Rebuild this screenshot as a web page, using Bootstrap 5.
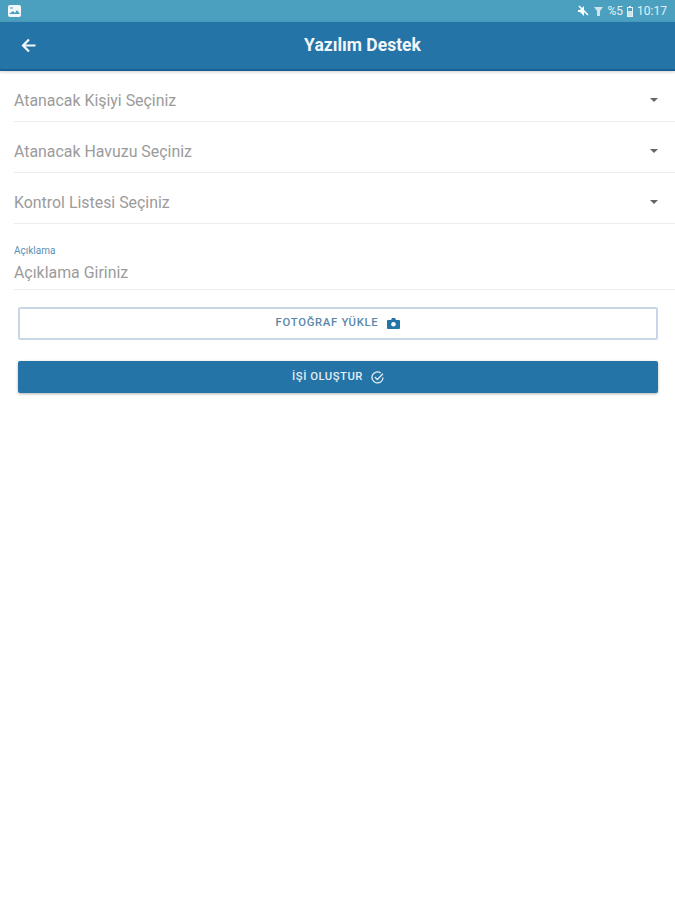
<!DOCTYPE html>
<html lang="tr">
<head>
  <meta charset="UTF-8" />
  <meta name="viewport" content="width=device-width, initial-scale=1.0"/>
  <title>Yazılım Destek</title>
  <link href="https://cdn.jsdelivr.net/npm/bootstrap@5.3.3/dist/css/bootstrap.min.css" rel="stylesheet"/>
  <style>
    body {
      font-family: Roboto, sans-serif;
      background: #fff;
      height: 900px;
      overflow: hidden;
    }

    .status-strip {
      height: 22px;
      background: #4ba0bf;
      color: #e3f0f5;
      font-size: 12px;
      padding: 0 8px;
    }

    .app-bar {
      height: 49px;
      padding-left: 50px;
      background: #2474a7;
      border-bottom: 2px solid #1b5f92;
      box-shadow: 0 1px 3px rgba(0, 0, 0, .2);
      color: #f2f7fa;
    }

    .app-bar .back-btn {
      left: 21px;
      top: 16px;
      line-height: 0;
    }

    .app-title {
      font-size: 17.5px;
      font-weight: 700;
    }

    .picker-row {
      height: 51px;
      margin-left: 14px;
      padding-top: 10px;
      padding-right: 17px;
      border-bottom: 1px solid #ececec;
      color: #9b9b9b;
      font-size: 15.9px;
    }

    .caret-down {
      width: 0;
      height: 0;
      margin-top: -3px;
      border-left: 4.5px solid transparent;
      border-right: 4.5px solid transparent;
      border-top: 4.5px solid #666;
    }

    .note-box {
      margin-left: 14px;
      height: 66px;
      padding-top: 21px;
      border-bottom: 1px solid #ececec;
    }

    .note-label {
      font-size: 10px;
      line-height: 12px;
      color: #5b90b4;
    }

    .note-text {
      font-size: 15.9px;
      line-height: 20px;
      margin-top: 6px;
      color: #9b9b9b;
    }

    .action-stack {
      padding: 17px 17px 0 18px;
    }

    .photo-btn, .submit-btn {
      font-size: 11.3px;
      font-weight: 500;
      letter-spacing: .5px;
      border-radius: 2px;
      padding: 0;
    }

    .photo-btn {
      height: 33px;
      gap: 9px;
      letter-spacing: .7px;
      border: 2px solid #c8d7e8;
      color: #5a88aa;
      background: #fff;
    }

    .submit-btn {
      height: 32px;
      gap: 8px;
      margin-top: 21px;
      border: 0;
      background: #2474a7;
      color: #e3edf4;
      box-shadow: 0 1px 3px rgba(0, 0, 0, .3);
    }
  </style>
</head>
<body>

  <div class="status-strip d-flex align-items-center justify-content-between">
    <svg width="13" height="12" viewBox="0 0 13 12"><rect width="13" height="12" rx="2" fill="#f2f8fa"/><path d="M1 9 5 6l2 2 2-3 3 4z" fill="#4ba0bf"/><rect x="2" y="2" width="3" height="2" fill="#9cc8d9"/></svg>
    <div class="d-flex align-items-center gap-1">
      <svg width="12" height="12" viewBox="0 0 12 12"><path d="M1 5h2l4-4v10L3 7H1z" fill="#fff"/><path d="M2 1l9 9" stroke="#fff" stroke-width="1.6"/></svg>
      <svg width="11" height="12" viewBox="0 0 11 12"><path d="M1 2h9L7 6v5H4V6z" fill="#cfe3ea"/></svg>
      <span>%5</span>
      <svg width="6" height="11" viewBox="0 0 6 11"><rect x=".5" y="1.5" width="5" height="9" fill="none" stroke="#e3f0f5"/><rect x="2" y="0" width="2" height="2" fill="#e3f0f5"/><rect x="1" y="5" width="4" height="5" fill="#cfe3ea"/></svg>
      <span>10:17</span>
    </div>
  </div>

  <div class="app-bar position-relative d-flex align-items-center justify-content-center">
    <span class="back-btn position-absolute">
      <svg width="15" height="15" viewBox="0 0 15 15"><path d="M14.500 7.500H2.500M8 1.500 2 7.500l6 6" fill="none" stroke="#f2f7fa" stroke-width="2.200"/></svg>
    </span>
    <span class="app-title">Yazılım Destek</span>
  </div>

  <div class="picker-row d-flex align-items-center justify-content-between">
    <span>Atanacak Kişiyi Seçiniz</span>
    <span class="caret-down"></span>
  </div>
  <div class="picker-row d-flex align-items-center justify-content-between">
    <span>Atanacak Havuzu Seçiniz</span>
    <span class="caret-down"></span>
  </div>
  <div class="picker-row d-flex align-items-center justify-content-between">
    <span>Kontrol Listesi Seçiniz</span>
    <span class="caret-down"></span>
  </div>

  <div class="note-box">
    <div class="note-label">Açıklama</div>
    <div class="note-text">Açıklama Giriniz</div>
  </div>

  <div class="action-stack">
    <button type="button" class="photo-btn btn w-100 d-flex align-items-center justify-content-center">
      FOTOĞRAF YÜKLE
      <svg width="13" height="11" viewBox="0 0 13 11"><path d="M1 2h3l1-2h3l1 2h3a1 1 0 0 1 1 1v7a1 1 0 0 1-1 1H1a1 1 0 0 1-1-1V3a1 1 0 0 1 1-1z" fill="#2474a7"/><circle cx="6.500" cy="6.200" r="2.300" fill="#fff"/></svg>
    </button>
    <button type="button" class="submit-btn btn w-100 d-flex align-items-center justify-content-center">
      İŞİ OLUŞTUR
      <svg width="13" height="13" viewBox="0 0 13 13"><path d="M9.800 2A5.500 5.500 0 1 0 12 6.500" fill="none" stroke="#e3edf4" stroke-width="1.300"/><path d="M3.800 6 6.300 8.500 12 2.800" fill="none" stroke="#e3edf4" stroke-width="1.300"/></svg>
    </button>
  </div>

  <script src="https://cdn.jsdelivr.net/npm/bootstrap@5.3.3/dist/js/bootstrap.bundle.min.js"></script>
</body>
</html>
